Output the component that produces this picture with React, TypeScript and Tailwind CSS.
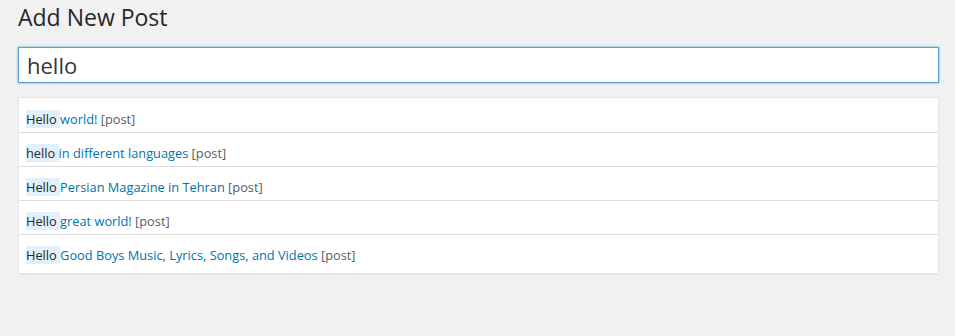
import React from "react";

const RESULTS = [
	{ id: 1, match: "Hello", rest: "world!" },
	{ id: 2, match: "hello", rest: "in different languages" },
	{ id: 3, match: "Hello", rest: "Persian Magazine in Tehran" },
	{ id: 4, match: "Hello", rest: "great world!" },
	{ id: 5, match: "Hello", rest: "Good Boys Music, Lyrics, Songs, and Videos" },
];

export default function App() {
	return (
		<div className="min-h-[336px] bg-[#f1f1f1] pl-[18px] pr-[16px] pt-[2px] font-['Open_Sans',sans-serif] text-[#23282d]">
			<h1 className="text-[23px] leading-[30px] font-normal mb-[15px]">
				Add New Post
			</h1>

			<input
				type="text"
				defaultValue="hello"
				className="block w-full h-[36px] bg-white border border-[#5b9dd9] shadow-[0_0_2px_rgba(30,140,190,0.8)] px-[8px] text-[22px] leading-[34px] text-[#32373c] outline-none"
			/>

			<ul className="mt-[14px] bg-white border border-[#e5e5e5] shadow-[0_1px_1px_rgba(0,0,0,0.04)] pb-[5px]">
				{RESULTS.map(({ id, match, rest }, index) => (
					<li
						key={id}
						className={`px-[7px] pb-[5px] text-[12.8px] leading-[16px] ${
							index === 0 ? "pt-[13px]" : "pt-[12px]"
						} ${index < RESULTS.length - 1 ? "border-b border-[#dddddd]" : ""}`}
					>
						<span className="bg-[#e2f0fb] text-[#23282d]">{match} </span>
						<a href="#" className="text-[#0073aa]">
							{rest}
						</a>{" "}
						<span className="text-[#555d66]">[post]</span>
					</li>
				))}
			</ul>
		</div>
	);
}
